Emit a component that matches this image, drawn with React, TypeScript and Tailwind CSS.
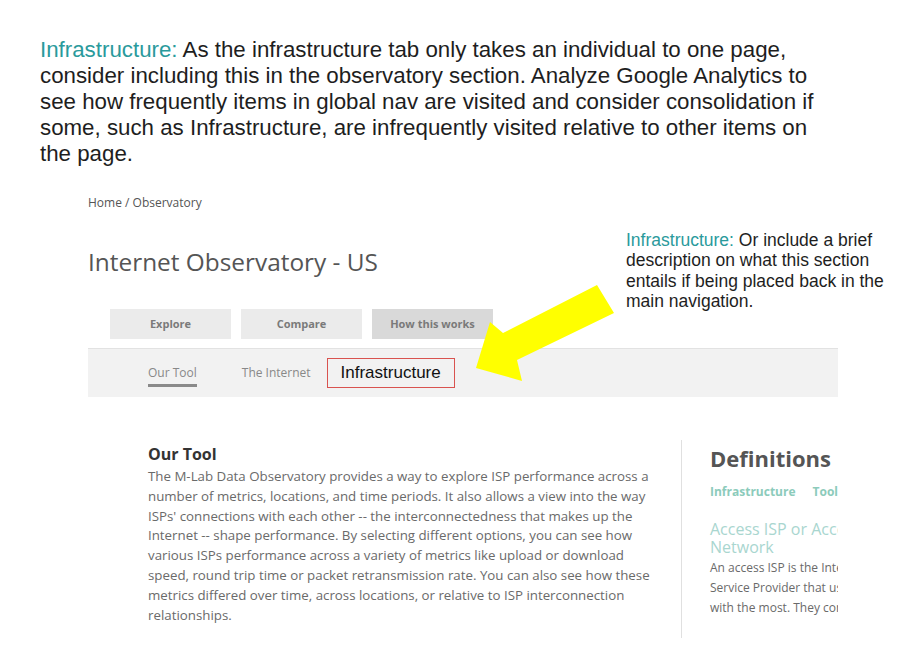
const site = { fontFamily: '"Open Sans", "Liberation Sans", sans-serif' };
const note = { fontFamily: '"Liberation Sans", Arial, sans-serif' };

const buttons = [
  { label: "Explore", active: false },
  { label: "Compare", active: false },
  { label: "How this works", active: true },
];

const Arrow = () => (
  <svg
    className="absolute left-0 top-0 pointer-events-none"
    width="900"
    height="668"
    viewBox="0 0 900 668"
  >
    <polygon
      points="476,368 490,322 503,333 597,285 614,313 517,360 522,381"
      fill="#ffff00"
    />
  </svg>
);

const App = () => {
  return (
    <div className="relative h-[668px] w-[900px] overflow-hidden bg-white">
      <p
        style={note}
        className="pl-[40px] pt-[37px] text-[22.3px] leading-[26px] text-[#1e1e1e]"
      >
        <span className="text-[#2a9a9c]">Infrastructure:</span> As the infrastructure tab only takes an individual to one page,
        <br />
        consider including this in the observatory section. Analyze Google Analytics to
        <br />
        see how frequently items in global nav are visited and consider consolidation if
        <br />
        some, such as Infrastructure, are infrequently visited relative to other items on
        <br />
        the page.
      </p>

      <div style={site} className="pl-[88px]">
        <div className="mt-[28px] text-[12px] leading-[16px] text-[#555]">
          Home / Observatory
        </div>
        <h1 className="mt-[35px] text-[24.4px] font-normal leading-[32px] text-[#555]">
          Internet Observatory - US
        </h1>

        <div className="mt-[31px] flex gap-[10px] pl-[22px]">
          {buttons.map((b) => (
            <div
              key={b.label}
              className={`flex h-[30px] w-[121px] items-center justify-center text-[11px] font-bold text-[#7a7a7a] ${
                b.active ? "bg-[#d9d9d9]" : "bg-[#ebebeb]"
              }`}
            >
              {b.label}
            </div>
          ))}
        </div>

        <div className="mt-[9px] flex h-[49px] w-[750px] items-center border-t border-[#e2e2e2] bg-[#f2f2f2] pl-[60px]">
          <div className="relative text-[12px] text-[#888]">
            Our Tool
            <div className="absolute -bottom-[5px] left-0 h-[3px] w-full bg-[#8a8a8a]" />
          </div>
          <div className="ml-[45px] text-[12px] text-[#888]">The Internet</div>
          <div
            style={note}
            className="ml-[16px] flex h-[30px] w-[128px] items-center justify-center border border-[#d9534f] text-[17px] text-[#111]"
          >
            Infrastructure
          </div>
        </div>

        <div className="mt-[43px] flex">
          <div className="w-[560px] pl-[60px] pt-[4px]">
            <h2 className="text-[16px] font-bold leading-[20px] text-[#333]">Our Tool</h2>
            <p className="mt-[3px] w-[520px] text-[13.3px] leading-[19.8px] text-[#6a6a6a]">
              The M-Lab Data Observatory provides a way to explore ISP performance across a
              <br />
              number of metrics, locations, and time periods. It also allows a view into the way
              <br />
              ISPs' connections with each other -- the interconnectedness that makes up the
              <br />
              Internet -- shape performance. By selecting different options, you can see how
              <br />
              various ISPs performance across a variety of metrics like upload or download
              <br />
              speed, round trip time or packet retransmission rate. You can also see how these
              <br />
              metrics differed over time, across locations, or relative to ISP interconnection
              <br />
              relationships.
            </p>
          </div>
          <div className="ml-[33px] h-[198px] w-[1px] bg-[#e0e0e0]" />
          <div className="w-[156px] overflow-hidden pl-[28px] pt-[4px]">
            <div className="w-[260px]">
              <h2 className="text-[22px] font-bold leading-[28px] text-[#555]">Definitions</h2>
              <div className="mt-[11px] flex gap-[17px] text-[12px] font-bold text-[#8ccbbb]">
                <span>Infrastructure</span>
                <span>Tools</span>
              </div>
              <h3 className="mt-[19px] text-[16px] leading-[18px] text-[#a9d6cf]">
                Access ISP or Access
                <br />
                Network
              </h3>
              <p className="mt-[2px] w-[240px] text-[12px] leading-[20px] text-[#6a6a6a]">
                An access ISP is the Internet
                <br />
                Service Provider that users
                <br />
                with the most. They connect
              </p>
            </div>
          </div>
        </div>
      </div>

      <p
        style={note}
        className="absolute left-[626px] top-[230px] text-[17.5px] leading-[20.3px] text-[#1e1e1e]"
      >
        <span className="text-[#2a9a9c]">Infrastructure:</span> Or include a brief
        <br />
        description on what this section
        <br />
        entails if being placed back in the
        <br />
        main navigation.
      </p>

      <Arrow />
    </div>
  );
};

export default App;
